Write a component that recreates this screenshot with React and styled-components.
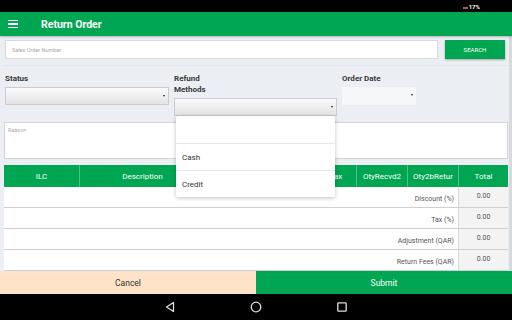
import React from "react";
import styled, { createGlobalStyle } from "styled-components";

const GREEN = "#00a651";

const GlobalStyle = createGlobalStyle`
  html, body {
    margin: 0;
    padding: 0;
    width: 512px;
    height: 320px;
    overflow: hidden;
    font-family: Roboto, "Liberation Sans", sans-serif;
  }
  * { box-sizing: border-box; }
`;

const columns = [
  { label: "ILC", width: 75 },
  { label: "Description", width: 126 },
  { label: "Qty", width: 55 },
  { label: "Price", width: 55 },
  { label: "Tax", width: 41 },
  { label: "OtyRecvd2", width: 51 },
  { label: "Oty2bRetur", width: 51 },
  { label: "Total", width: 50 },
];

const summary = ["Discount (%)", "Tax (%)", "Adjustment (QAR)", "Return Fees (QAR)"];

const App = () => {
  return (
    <Screen>
      <GlobalStyle />
      <StatusBar>
        <Battery />
        <span>17%</span>
      </StatusBar>
      <AppBar>
        <Hamburger>
          <i />
          <i />
          <i />
        </Hamburger>
        <Title>Return Order</Title>
      </AppBar>

      <Content>
        <SearchRow>
          <SearchInput>Sales Order Number</SearchInput>
          <SearchButton>SEARCH</SearchButton>
        </SearchRow>

        <Filters>
          <Field>
            <Label>Status</Label>
            <Select>
              <Arrow />
            </Select>
          </Field>
          <Field>
            <Label narrow>Refund Methods</Label>
            <Select>
              <Arrow />
            </Select>
            <Menu>
              <MenuItem />
              <MenuItem>Cash</MenuItem>
              <MenuItem>Credit</MenuItem>
            </Menu>
          </Field>
          <Field>
            <Label>Order Date</Label>
            <Select flat>
              <Arrow />
            </Select>
          </Field>
        </Filters>

        <Reason>Reason</Reason>

        <Table>
          <HeadRow>
            {columns.map((c) => (
              <HeadCell key={c.label} style={{ width: c.width }}>
                {c.label}
              </HeadCell>
            ))}
          </HeadRow>
          {summary.map((s) => (
            <BodyRow key={s}>
              <SumLabel>{s}</SumLabel>
              <SumValue>0.00</SumValue>
            </BodyRow>
          ))}
        </Table>
      </Content>

      <Actions>
        <ActionButton>Cancel</ActionButton>
        <ActionButton primary>Submit</ActionButton>
      </Actions>

      <NavBar>
        <svg width="12" height="12" viewBox="0 0 12 12">
          <path d="M9.5 1.5 L2.5 6 L9.5 10.5 Z" fill="none" stroke="#ddd" strokeWidth="1.3" strokeLinejoin="round" />
        </svg>
        <svg width="12" height="12" viewBox="0 0 12 12">
          <circle cx="6" cy="6" r="4.8" fill="none" stroke="#ddd" strokeWidth="1.3" />
        </svg>
        <svg width="12" height="12" viewBox="0 0 12 12">
          <rect x="1.8" y="1.8" width="8.4" height="8.4" rx="0.8" fill="none" stroke="#ddd" strokeWidth="1.3" />
        </svg>
      </NavBar>
    </Screen>
  );
};

const Screen = styled.div`
  width: 512px;
  height: 320px;
  display: flex;
  flex-direction: column;
  background: #ebeef2;
`;

const StatusBar = styled.div`
  height: 12px;
  background: #000;
  display: flex;
  align-items: center;
  justify-content: flex-end;
  padding-right: 32px;
  gap: 1px;
  color: #fff;
  font-size: 6px;
  font-weight: bold;
`;

const Battery = styled.div`
  width: 5px;
  height: 2px;
  margin-top: 4px;
  background: #c0504a;
`;

const AppBar = styled.div`
  height: 24px;
  background: ${GREEN};
  display: flex;
  align-items: center;
  padding-left: 8px;
  box-shadow: 0 1px 2px rgba(0, 0, 0, 0.25);
  position: relative;
  z-index: 2;
`;

const Hamburger = styled.div`
  width: 10px;
  display: flex;
  flex-direction: column;
  gap: 2px;
  i {
    display: block;
    height: 1.6px;
    background: #fff;
  }
`;

const Title = styled.div`
  margin-left: 23px;
  color: #fff;
  font-size: 10.5px;
  font-weight: bold;
`;

const Content = styled.div`
  flex: 1;
  overflow: hidden;
  padding: 4px 4px 0 4px;
  display: flex;
  flex-direction: column;
  border-right: 3px solid #d7dadd;
  padding-right: 1px;
`;

const SearchRow = styled.div`
  display: flex;
  gap: 7px;
  padding: 0 3px 6px 1px;
  border-bottom: 1px solid #e2e6ea;
`;

const SearchInput = styled.div`
  flex: 1;
  height: 19px;
  background: #fff;
  border: 1px solid #d6dadf;
  font-size: 5.5px;
  color: #a8a8a8;
  display: flex;
  align-items: center;
  padding-left: 6px;
`;

const SearchButton = styled.div`
  width: 60px;
  height: 19px;
  background: ${GREEN};
  color: #fff;
  font-size: 6px;
  display: flex;
  align-items: center;
  justify-content: center;
  box-shadow: 0 1px 2px rgba(0, 0, 0, 0.3);
`;

const Filters = styled.div`
  display: grid;
  grid-template-columns: 164px 163px 74px;
  column-gap: 5px;
  padding: 7px 0 0 1px;
  align-items: start;
`;

const Field = styled.div`
  position: relative;
  display: flex;
  flex-direction: column;
`;

const Label = styled.div`
  font-size: 8px;
  font-weight: bold;
  color: #3a3a3a;
  line-height: 11px;
  margin-bottom: 3px;
  max-width: ${(p) => (p.narrow ? "50px" : "none")};
`;

const Select = styled.div`
  height: 18px;
  position: relative;
  border: ${(p) => (p.flat ? "none" : "1px solid #c9ccd0")};
  background: ${(p) =>
    p.flat ? "#f6f7f8" : "linear-gradient(#fbfbfb, #e3e3e3)"};
`;

const Arrow = styled.div`
  position: absolute;
  right: 3px;
  top: 7px;
  width: 0;
  height: 0;
  border-left: 1.5px solid transparent;
  border-right: 1.5px solid transparent;
  border-top: 2.5px solid #222;
`;

const Menu = styled.div`
  position: absolute;
  top: 43px;
  left: 2px;
  width: 159px;
  background: #fff;
  border-radius: 2px;
  box-shadow: 0 1px 4px rgba(0, 0, 0, 0.25);
  z-index: 5;
`;

const MenuItem = styled.div`
  height: 27px;
  display: flex;
  align-items: center;
  padding-left: 6px;
  font-size: 8px;
  color: #333;
  & + & {
    border-top: 1px solid #e8e8e8;
  }
`;

const Reason = styled.div`
  margin-top: 6px;
  height: 41px;
  background: #fff;
  border: 1px solid #d0d4d8;
  font-size: 5.5px;
  color: #b0b0b0;
  padding: 4px 3px;
`;

const Table = styled.div`
  margin-top: 6px;
  width: 504px;
  background: #fff;
`;

const HeadRow = styled.div`
  display: flex;
  height: 22px;
  background: ${GREEN};
`;

const HeadCell = styled.div`
  display: flex;
  align-items: center;
  justify-content: center;
  color: #fff;
  font-size: 8px;
  font-weight: 400;
  & + & {
    border-left: 1px solid rgba(255, 255, 255, 0.3);
  }
`;

const BodyRow = styled.div`
  display: flex;
  height: 21px;
  border-bottom: 1px solid #cfcfcf;
`;

const SumLabel = styled.div`
  flex: 1;
  display: flex;
  align-items: flex-end;
  justify-content: flex-end;
  padding: 0 4px 4px 0;
  font-size: 7px;
  color: #555;
`;

const SumValue = styled.div`
  width: 50px;
  background: #f3f3f3;
  border-left: 1px solid #d8d8d8;
  display: flex;
  justify-content: center;
  padding-top: 5px;
  font-size: 7px;
  color: #555;
`;

const Actions = styled.div`
  display: flex;
  height: 23px;
`;

const ActionButton = styled.div`
  flex: 1;
  display: flex;
  align-items: center;
  justify-content: center;
  font-size: 8.5px;
  background: ${(p) => (p.primary ? GREEN : "#fee3c8")};
  color: ${(p) => (p.primary ? "#fff" : "#333")};
`;

const NavBar = styled.div`
  height: 26px;
  background: #000;
  display: flex;
  align-items: center;
  justify-content: center;
  gap: 74px;
`;

export default App;
